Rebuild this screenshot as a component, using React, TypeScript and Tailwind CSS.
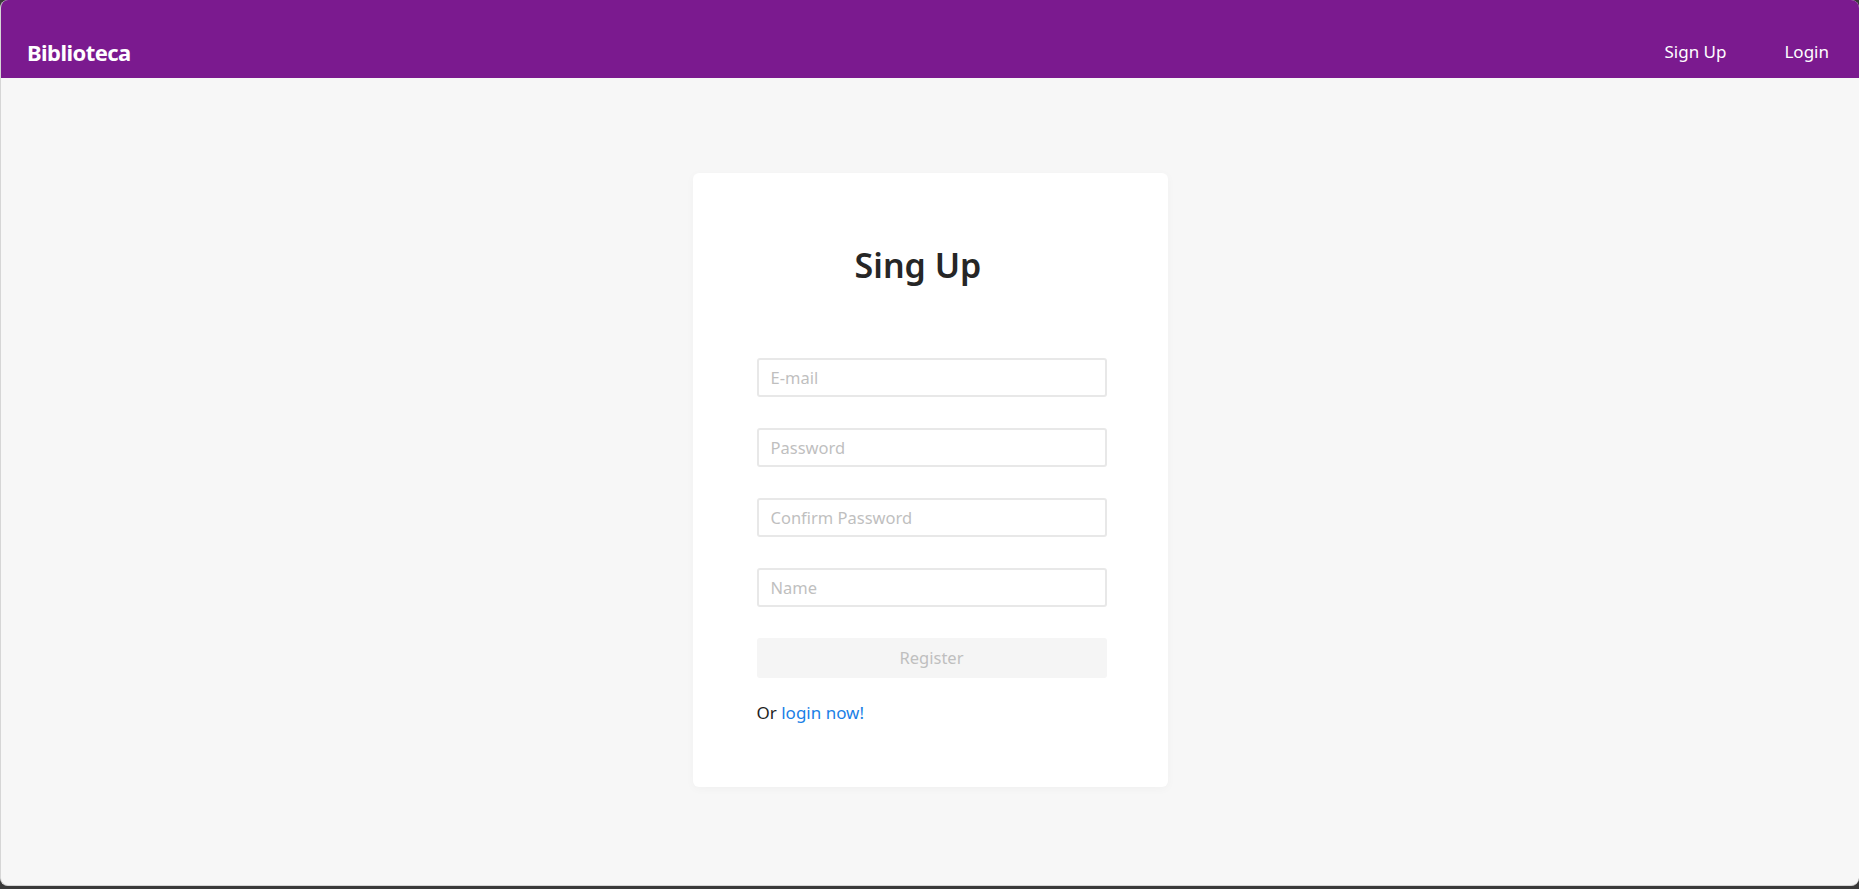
export default function App() {
  const fields = ["E-mail", "Password", "Confirm Password", "Name"];

  return (
    <div className="h-screen w-full bg-[#3a3a3a] font-['Noto_Sans',sans-serif]">
      <div className="flex h-[886px] flex-col overflow-hidden rounded-lg border-b border-l border-[#d6d6d6] bg-[#f7f7f7]">
        <header className="flex h-[78px] shrink-0 items-center justify-between bg-[#7b1a8f] pt-[26px] pl-[26px] pr-[30px]">
          <span className="text-[22px] font-bold tracking-tight text-white">Biblioteca</span>
          <nav className="flex items-center gap-[58px] text-[17px] text-white">
            <a href="#">Sign Up</a>
            <a href="#">Login</a>
          </nav>
        </header>

        <main className="flex justify-center pt-[95px]">
          <div className="w-[475px] rounded-md bg-white pt-[72px] pb-[62px] pl-[64px] shadow-[0_2px_10px_rgba(0,0,0,0.03)]">
            <h1 className="pr-[88px] text-center text-[34px] font-semibold leading-[40px] text-[#262626]">
              Sing Up
            </h1>
            <form className="mt-[73px] flex w-[350px] flex-col gap-[31px]">
              {fields.map((f) => (
                <input
                  key={f}
                  type={f.includes("Password") ? "password" : "text"}
                  placeholder={f}
                  className="h-[39px] w-full rounded-[3px] border-2 border-[#e8e8e8] bg-white px-[12px] text-[16.5px] text-[#262626] outline-none placeholder:text-[#bfbfbf]"
                />
              ))}
              <button
                type="button"
                disabled
                className="h-[40px] w-full rounded-[3px] bg-[#f5f5f5] text-[16.5px] text-[#bfbfbf]"
              >
                Register
              </button>
            </form>
            <p className="mt-[23px] text-[17px] leading-[24px] text-[#1f1f1f]">
              Or <a href="#" className="text-[#1a7fe6]">login now!</a>
            </p>
          </div>
        </main>
      </div>
    </div>
  );
}
